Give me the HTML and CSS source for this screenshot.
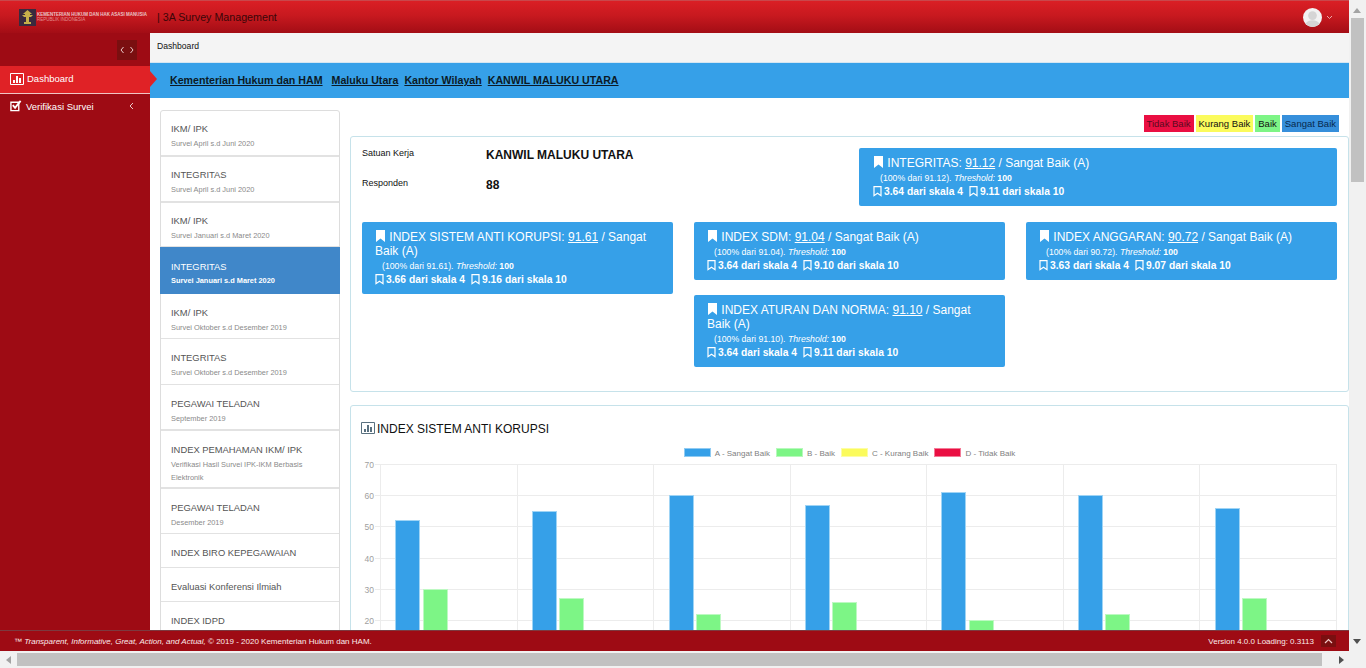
FILE: index.html
```html
<!DOCTYPE html>
<html lang="id">
<head>
  <meta charset="UTF-8">
  <meta name="viewport" content="width=device-width, initial-scale=1.0">
  <title>3A Survey Management</title>
  <link rel="stylesheet" href="styles.css">
</head>
<body>
  <svg class="defs" width="0" height="0">
    <symbol id="ic-mark" viewBox="0 0 9 12"><path d="M0 0h9v12L4.500 8.500 0 12z" fill="currentColor"/></symbol>
    <symbol id="ic-mark-o" viewBox="0 0 9 11"><path d="M1 0.700h7v9L4.500 7.200 1 9.700z" fill="none" stroke="currentColor" stroke-width="1.200"/></symbol>
    <symbol id="ic-chart" viewBox="0 0 14 12"><path d="M.5.5h13v11H.5z" fill="none" stroke="currentColor"/><path d="M3 7h2v3H3zM6 3h2v7H6zM9 5h2v5H9z" fill="currentColor"/></symbol>
  </svg>

  <div class="window">
    <div class="app">
      <header class="topbar">
        <div class="brand">
          <svg class="brand-logo" width="17" height="17" viewBox="0 0 17 17"><rect width="17" height="17" fill="#3a2a3e"/><path d="M8.500 1 4 5h2v1H3l2 2h2v5H5v2h7v-2h-2V8h2l2-2h-3V5h2z" fill="#c8b04a"/></svg>
          <div class="brand-text">
            <div class="brand-name">KEMENTERIAN HUKUM DAN HAK ASASI MANUSIA</div>
            <div class="brand-sub">REPUBLIK INDONESIA</div>
          </div>
        </div>
        <div class="app-title">| 3A Survey Management</div>
        <div class="user">
          <svg class="avatar" width="19" height="19" viewBox="0 0 20 20"><circle cx="10" cy="10" r="10" fill="#f2f2f2"/><circle cx="10" cy="8" r="4.600" fill="#d5d5d5"/><path d="M2.600 16.600C4.500 13.800 7 13 10 13s5.500.8 7.400 3.600A10 10 0 0 1 2.600 16.600z" fill="#d5d5d5"/></svg>
          <svg width="7" height="5" viewBox="0 0 7 5"><path d="M1 1l2.500 2.500L6 1" fill="none" stroke="#eaa" stroke-width="1"/></svg>
        </div>
      </header>

      <div class="middle">
        <nav class="sidebar">
          <div class="side-toggle-row">
            <span class="side-toggle">
              <svg width="14" height="8" viewBox="0 0 14 8"><path d="M3.500 1 1 4l2.500 3M10.500 1 13 4l-2.500 3" fill="none" stroke="#e9c9c9" stroke-width="1"/></svg>
            </span>
          </div>
          <a class="side-item active">
            <svg width="14" height="12"><use href="#ic-chart"/></svg>
            <span>Dashboard</span>
          </a>
          <a class="side-item">
            <svg width="12" height="12" viewBox="0 0 13 13"><path d="M1 2.500h8.500v9H1z" fill="none" stroke="currentColor" stroke-width="1.500"/><path d="M3 5.500l2.500 3L11.500 1" fill="none" stroke="currentColor" stroke-width="2"/></svg>
            <span class="side-label">Verifikasi Survei</span>
            <svg class="side-caret" width="5" height="8" viewBox="0 0 5 8"><path d="M4 1 1 4l3 3" fill="none" stroke="#e9c9c9" stroke-width="1"/></svg>
          </a>
        </nav>

        <main class="content">
          <div class="crumb">Dashboard</div>
          <div class="banner">
            <a>Kementerian Hukum dan HAM</a>
            <a>Maluku Utara</a>
            <a>Kantor Wilayah</a>
            <a>KANWIL MALUKU UTARA</a>
          </div>

          <div class="columns">
            <aside class="survey-list">
              <div class="survey thick"><div class="survey-name">IKM/ IPK</div><div class="survey-sub">Survei April s.d Juni 2020</div></div>
              <div class="survey thick"><div class="survey-name">INTEGRITAS</div><div class="survey-sub">Survei April s.d Juni 2020</div></div>
              <div class="survey"><div class="survey-name">IKM/ IPK</div><div class="survey-sub">Survei Januari s.d Maret 2020</div></div>
              <div class="survey current"><div class="survey-name">INTEGRITAS</div><div class="survey-sub">Survei Januari s.d Maret 2020</div></div>
              <div class="survey"><div class="survey-name">IKM/ IPK</div><div class="survey-sub">Survei Oktober s.d Desember 2019</div></div>
              <div class="survey"><div class="survey-name">INTEGRITAS</div><div class="survey-sub">Survei Oktober s.d Desember 2019</div></div>
              <div class="survey thick"><div class="survey-name">PEGAWAI TELADAN</div><div class="survey-sub">September 2019</div></div>
              <div class="survey thick"><div class="survey-name">INDEX PEMAHAMAN IKM/ IPK</div><div class="survey-sub">Verifikasi Hasil Survei IPK-IKM Berbasis Elektronik</div></div>
              <div class="survey"><div class="survey-name">PEGAWAI TELADAN</div><div class="survey-sub">Desember 2019</div></div>
              <div class="survey single"><div class="survey-name">INDEX BIRO KEPEGAWAIAN</div></div>
              <div class="survey single"><div class="survey-name">Evaluasi Konferensi Ilmiah</div></div>
              <div class="survey single"><div class="survey-name">INDEX IDPD</div></div>
            </aside>

            <section class="detail">
              <div class="legend-tags">
                <span class="tag tag-red">Tidak Baik</span>
                <span class="tag tag-yellow">Kurang Baik</span>
                <span class="tag tag-green">Baik</span>
                <span class="tag tag-blue">Sangat Baik</span>
              </div>

              <div class="panel summary">
                <div class="summary-top">
                  <div class="facts">
                    <div class="fact"><span class="fact-label">Satuan Kerja</span><span class="fact-value">KANWIL MALUKU UTARA</span></div>
                    <div class="fact"><span class="fact-label">Responden</span><span class="fact-value">88</span></div>
                  </div>
                  <div class="score score-top">
                    <div class="score-title"><svg class="mark" width="9" height="12"><use href="#ic-mark"/></svg> INTEGRITAS: <u>91.12</u> / Sangat Baik (A)</div>
                    <div class="score-note">(100% dari 91.12). <i>Threshold:</i> <b>100</b></div>
                    <div class="score-scale">
                      <span class="scale-item"><svg width="9" height="11"><use href="#ic-mark-o"/></svg>3.64 dari skala 4</span>
                      <span class="scale-item"><svg width="9" height="11"><use href="#ic-mark-o"/></svg>9.11 dari skala 10</span>
                    </div>
                  </div>
                </div>
                <div class="score-grid">
                  <div class="score">
                    <div class="score-title"><svg class="mark" width="9" height="12"><use href="#ic-mark"/></svg> INDEX SISTEM ANTI KORUPSI: <u>91.61</u> / Sangat<br>Baik (A)</div>
                    <div class="score-note">(100% dari 91.61). <i>Threshold:</i> <b>100</b></div>
                    <div class="score-scale">
                      <span class="scale-item"><svg width="9" height="11"><use href="#ic-mark-o"/></svg>3.66 dari skala 4</span>
                      <span class="scale-item"><svg width="9" height="11"><use href="#ic-mark-o"/></svg>9.16 dari skala 10</span>
                    </div>
                  </div>
                  <div class="score-stack">
                    <div class="score">
                      <div class="score-title"><svg class="mark" width="9" height="12"><use href="#ic-mark"/></svg> INDEX SDM: <u>91.04</u> / Sangat Baik (A)</div>
                      <div class="score-note">(100% dari 91.04). <i>Threshold:</i> <b>100</b></div>
                      <div class="score-scale">
                        <span class="scale-item"><svg width="9" height="11"><use href="#ic-mark-o"/></svg>3.64 dari skala 4</span>
                        <span class="scale-item"><svg width="9" height="11"><use href="#ic-mark-o"/></svg>9.10 dari skala 10</span>
                      </div>
                    </div>
                    <div class="score">
                      <div class="score-title"><svg class="mark" width="9" height="12"><use href="#ic-mark"/></svg> INDEX ATURAN DAN NORMA: <u>91.10</u> / Sangat<br>Baik (A)</div>
                      <div class="score-note">(100% dari 91.10). <i>Threshold:</i> <b>100</b></div>
                      <div class="score-scale">
                        <span class="scale-item"><svg width="9" height="11"><use href="#ic-mark-o"/></svg>3.64 dari skala 4</span>
                        <span class="scale-item"><svg width="9" height="11"><use href="#ic-mark-o"/></svg>9.11 dari skala 10</span>
                      </div>
                    </div>
                  </div>
                  <div class="score">
                    <div class="score-title"><svg class="mark" width="9" height="12"><use href="#ic-mark"/></svg> INDEX ANGGARAN: <u>90.72</u> / Sangat Baik (A)</div>
                    <div class="score-note">(100% dari 90.72). <i>Threshold:</i> <b>100</b></div>
                    <div class="score-scale">
                      <span class="scale-item"><svg width="9" height="11"><use href="#ic-mark-o"/></svg>3.63 dari skala 4</span>
                      <span class="scale-item"><svg width="9" height="11"><use href="#ic-mark-o"/></svg>9.07 dari skala 10</span>
                    </div>
                  </div>
                </div>
              </div>

              <div class="panel chart-panel">
                <h3 class="chart-title"><svg width="14" height="12"><use href="#ic-chart"/></svg>INDEX SISTEM ANTI KORUPSI</h3>
                <div class="chart-legend">
                  <span><i class="swatch sw-blue"></i>A - Sangat Baik</span>
                  <span><i class="swatch sw-green"></i>B - Baik</span>
                  <span><i class="swatch sw-yellow"></i>C - Kurang Baik</span>
                  <span><i class="swatch sw-red"></i>D - Tidak Baik</span>
                </div>
                <svg class="chart" width="987" height="200" viewBox="0 1 987 200">
                  <g stroke="#ececec" fill="none">
                    <path d="M14 6.500H975M14 37.500H975M14 68.500H975M14 100.500H975M14 131.500H975M14 162.500H975M14 193.500H975"/>
                    <path d="M19.500 6V202M156.500 6V202M292.500 6V202M429.500 6V202M565.500 6V202M702.500 6V202M838.500 6V202M975.500 6V202"/>
                  </g>
                  <g fill="#a0a0a0" font-size="8.500" font-family="Liberation Sans, sans-serif" text-anchor="end">
                    <text x="13" y="10">70</text><text x="13" y="41">60</text><text x="13" y="72">50</text><text x="13" y="104">40</text><text x="13" y="135">30</text><text x="13" y="166">20</text>
                  </g>
                  <g fill="#36a0e8" stroke="#9fd4f5">
                    <rect x="34.500" y="62.500" width="24" height="142"/><rect x="171.500" y="53.500" width="24" height="152"/><rect x="308.500" y="37.500" width="24" height="167"/><rect x="444.500" y="47.500" width="24" height="157"/><rect x="580.500" y="34.500" width="24" height="172"/><rect x="717.500" y="37.500" width="24" height="167"/><rect x="854.500" y="50.500" width="24" height="157"/>
                  </g>
                  <g fill="#7df586" stroke="#bdf9c2">
                    <rect x="62.500" y="131.500" width="24" height="72"/><rect x="198.500" y="140.500" width="24" height="62"/><rect x="335.500" y="156.500" width="24" height="47"/><rect x="471.500" y="144.500" width="24" height="62"/><rect x="608.500" y="162.500" width="24" height="42"/><rect x="744.500" y="156.500" width="24" height="47"/><rect x="881.500" y="140.500" width="24" height="62"/>
                  </g>
                </svg>
              </div>
            </section>
          </div>
        </main>
      </div>

      <footer class="footer">
        <div class="foot-left">&#8482; <i>Transparent, Informative, Great, Action, and Actual,</i> &copy; 2019 - 2020 Kementerian Hukum dan HAM.</div>
        <div class="foot-right">Version 4.0.0 Loading: 0.3113 <span class="to-top"><svg width="9" height="6" viewBox="0 0 9 6"><path d="M1 5l3.500-3.500L8 5" fill="none" stroke="#f3c9c9" stroke-width="1.200"/></svg></span></div>
      </footer>
    </div>

    <!-- scrollbar browser -->
    <div class="vscroll">
      <span class="arrow arrow-up"></span>
      <div class="vthumb"></div>
      <span class="arrow arrow-down"></span>
    </div>
    <div class="hscroll">
      <span class="arrow arrow-left"></span>
      <div class="hthumb"></div>
      <span class="arrow arrow-right"></span>
    </div>
    <div class="corner"></div>
  </div>
</body>
</html>
```

FILE: styles.css
```css
* { box-sizing: border-box; }

html, body {
  margin: 0;
  height: 100%;
  overflow: hidden;
}

body {
  background: #f1f1f1;
  color: #111;
  font-family: "Liberation Sans", Arial, sans-serif;
  font-size: 12px;
}

.defs { position: absolute; }

.window {
  display: grid;
  grid-template-columns: 1349px 17px;
  grid-template-rows: 651px 17px;
  height: 668px;
}

.app {
  display: flex;
  flex-direction: column;
  overflow: hidden;
  background: #fff;
}

/* header */
.topbar {
  display: flex;
  align-items: center;
  flex: 0 0 33px;
  padding-left: 19px;
  padding-right: 16px;
  background: linear-gradient(#da1f25, #c8191f 45%, #a30d15);
  border-top: 1px solid #c9474b;
}

.brand {
  display: flex;
  align-items: center;
  gap: 1px;
  width: 138px;
}

.brand-name {
  color: #e9c4c6;
  font-size: 4.5px;
  font-weight: bold;
  white-space: nowrap;
}

.brand-sub {
  color: #e08f92;
  font-size: 4.5px;
}

.app-title {
  color: #3a0608;
  font-size: 10.7px;
}

.user {
  display: flex;
  align-items: center;
  gap: 4px;
  margin-left: auto;
}

.avatar { display: block; }

/* sidebar */
.middle {
  display: flex;
  flex: 1;
  min-height: 0;
}

.sidebar {
  flex: 0 0 150px;
  background: #9e0b14;
  color: #fff;
}

.side-toggle-row {
  display: flex;
  justify-content: flex-end;
  height: 33px;
  padding: 7px 13px 0 0;
}

.side-toggle {
  display: flex;
  align-items: center;
  justify-content: center;
  width: 20px;
  height: 20px;
  background: #7a0f10;
}

.side-item {
  display: flex;
  align-items: center;
  gap: 4px;
  height: 28px;
  padding-left: 10px;
  padding-bottom: 4px;
  font-size: 9.5px;
}

.side-item.active {
  gap: 3px;
  height: 28px;
  padding-bottom: 2px;
  background: #e02226;
  border-bottom: 1px solid #f0c4c4;
}

.side-label { flex: 1; }

.side-caret { margin-right: 16px; }

/* content */
.content {
  flex: 1;
  min-width: 0;
  overflow: hidden;
}

.crumb {
  height: 30px;
  padding: 7px 7px;
  background: #f4f4f4;
  border-bottom: 1px solid #d5e6f2;
  font-size: 8.6px;
  line-height: 12px;
}

.banner {
  position: relative;
  display: flex;
  gap: 6px;
  height: 35px;
  padding-left: 20px;
  background: #36a0e8;
  font-size: 10.65px;
  font-weight: bold;
  line-height: 34px;
}

.banner::before {
  content: "";
  position: absolute;
  left: 0;
  top: 8px;
  border-left: 7px solid #e02226;
  border-top: 8px solid transparent;
  border-bottom: 8px solid transparent;
}

.banner a {
  color: #0b1a26;
  text-decoration: underline;
}

.banner a:first-child { margin-right: 3px; }

.columns {
  display: flex;
  align-items: flex-start;
  gap: 10px;
  padding: 12px 0 0 10px;
}

/* survey list */
.survey-list {
  flex: 0 0 180px;
  border: 1px solid #ddd;
  border-radius: 3px 3px 0 0;
}

.survey {
  height: 46px;
  padding: 12px 10px 0;
  border-bottom: 1px solid #e2e2e2;
  color: #555;
}

.survey.thick { border-bottom-width: 2px; }

.survey:nth-child(-n+3) { padding-top: 11px; }
.survey:nth-child(3) { height: 44px; }
.survey:nth-child(5) { height: 45px; }
.survey:nth-child(8) { height: 58px; }
.survey:nth-child(9) { height: 45px; }

.survey-name {
  font-size: 9.4px;
  line-height: 14px;
}

.survey-sub {
  margin-top: 1px;
  color: #8a8a8a;
  font-size: 7.4px;
  line-height: 13px;
}

.survey.current {
  height: 47px;
  margin: 0 -1px;
  padding: 13px 11px 0;
  background: #4087c9;
  border-bottom: 0;
  color: #fff;
}

.survey.current .survey-sub {
  margin-top: 0;
  color: #fff;
  font-weight: bold;
}

.survey.single { height: 34px; }

/* detail */
.detail {
  flex: 1;
  min-width: 0;
}

.legend-tags {
  display: flex;
  justify-content: flex-end;
  gap: 2px;
  height: 17px;
  margin: 5px 10px 4px 0;
}

.tag {
  padding: 0 3px;
  font-size: 9.5px;
  line-height: 17px;
}

.tag-red { background: #ea0f42; color: #5a0a20; }
.tag-yellow { background: #fbfb5c; }
.tag-green { background: #7df586; }
.tag-blue { background: #368fdb; color: #07294d; }

.panel {
  border: 1px solid #c6e2ea;
  border-radius: 3px;
}

.summary {
  height: 256px;
  padding: 11px 11px 0;
}

.summary-top {
  display: flex;
  justify-content: space-between;
  align-items: flex-start;
  height: 74px;
}

.fact {
  display: flex;
  height: 30px;
}

.fact-label {
  width: 124px;
  font-size: 9px;
  line-height: 11px;
}

.fact-value {
  font-size: 12px;
  font-weight: bold;
  line-height: 14px;
}

.score {
  padding: 8px 13px 7px;
  background: #36a0e8;
  border-radius: 2px;
  color: #fff;
}

.score-top {
  width: 478px;
  padding-left: 14px;
}

.score-title {
  font-size: 12px;
  line-height: 14px;
}

.score-title u { text-underline-offset: 1px; }

.mark {
  margin-left: 1px;
  margin-right: 1px;
  vertical-align: -1px;
}

.score-note {
  margin-top: 2px;
  padding-left: 7px;
  font-size: 8.7px;
  line-height: 13px;
}

.score-scale {
  display: flex;
  gap: 6px;
  font-size: 10.3px;
  font-weight: bold;
  line-height: 14px;
}

.scale-item svg {
  margin-right: 2px;
  vertical-align: -2px;
}

.score-grid {
  display: grid;
  grid-template-columns: repeat(3, 311px);
  justify-content: space-between;
  align-items: start;
}

.score-stack {
  display: flex;
  flex-direction: column;
  gap: 15px;
}

.chart-panel {
  height: 300px;
  margin-top: 13px;
  padding: 16px 10px 0;
}

.chart-title {
  margin: 0;
  font-size: 12px;
  font-weight: normal;
  line-height: 14px;
}

.chart-title svg {
  margin-right: 2px;
  vertical-align: -1px;
  color: #59707f;
}

.chart-legend {
  display: flex;
  justify-content: center;
  gap: 6px;
  margin-top: 12px;
  color: #808080;
  font-size: 8px;
  line-height: 10px;
}

.swatch {
  display: inline-block;
  width: 27px;
  height: 9px;
  margin-right: 4px;
  border: 1px solid rgba(255, 255, 255, 0.45);
  vertical-align: -1px;
}

.sw-blue { background: #36a0e8; }
.sw-green { background: #7df586; }
.sw-yellow { background: #fbfb5c; }
.sw-red { background: #ea0f42; }

.chart { display: block; }

/* footer */
.footer {
  display: flex;
  align-items: center;
  justify-content: space-between;
  flex: 0 0 21px;
  padding: 0 13px 0 14px;
  background: #9e0b14;
  border-top: 1px solid #7c3a40;
  color: #fbeaea;
  font-size: 8px;
}

.foot-right {
  display: flex;
  align-items: center;
  gap: 7px;
}

.to-top {
  display: flex;
  align-items: center;
  justify-content: center;
  width: 15px;
  height: 12px;
  background: #7a0f10;
}

/* scrollbar */
.vscroll, .hscroll {
  position: relative;
  background: #f1f1f1;
}

.vthumb {
  position: absolute;
  top: 18px;
  left: 2px;
  width: 13px;
  height: 164px;
  background: #c1c1c1;
}

.hthumb {
  position: absolute;
  left: 17px;
  top: 2px;
  width: 1305px;
  height: 13px;
  background: #c1c1c1;
}

.arrow {
  position: absolute;
  width: 0;
  height: 0;
  border: 4px solid transparent;
}

.arrow-up { top: 8px; left: 4px; border-top: 0; border-bottom: 5px solid #a3a3a3; }
.arrow-down { bottom: 7px; left: 4px; border-bottom: 0; border-top: 5px solid #505050; }
.arrow-left { left: 6px; top: 5px; border-left: 0; border-right: 5px solid #a3a3a3; }
.arrow-right { right: 5px; top: 5px; border-right: 0; border-left: 5px solid #505050; }
```
